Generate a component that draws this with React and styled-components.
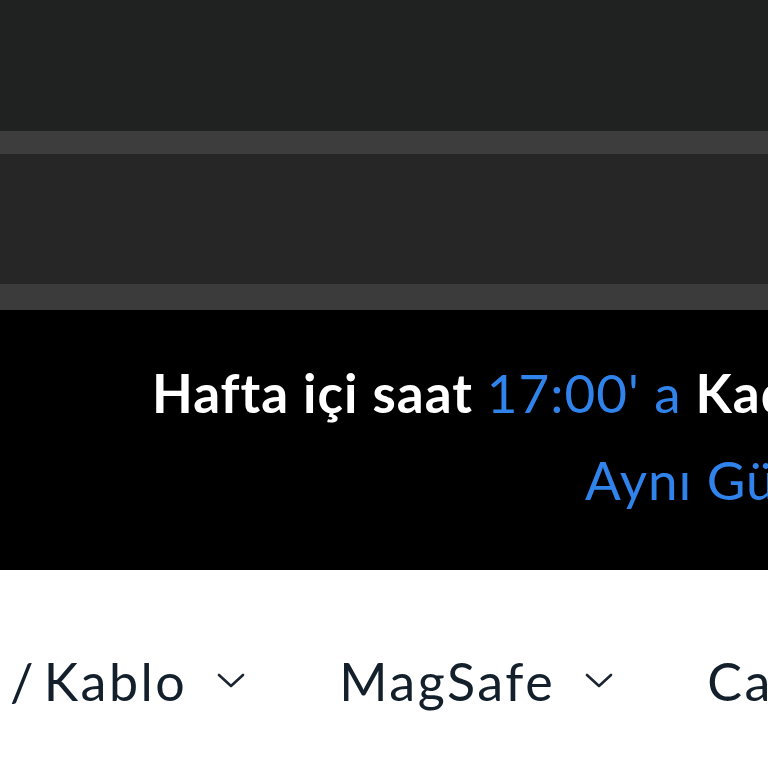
import React from "react";
import styled, { createGlobalStyle } from "styled-components";

const Global = createGlobalStyle`
  html, body { margin: 0; padding: 0; background: #ffffff; }
  body { font-family: "Lato", "Noto Sans", sans-serif; overflow: hidden; }
  * { box-sizing: border-box; }
`;

const Page = styled.div`
  width: 768px;
  height: 768px;
  overflow: hidden;
  display: flex;
  flex-direction: column;
`;

const Band = styled.div`
  flex: 0 0 ${(p) => p.$h}px;
  background: ${(p) => p.$bg};
`;

const Announcement = styled.section`
  flex: 0 0 260px;
  background: #000000;
  display: flex;
  flex-direction: column;
  overflow: hidden;
  padding-top: 39px;
`;

const Line = styled.p`
  margin: 0;
  white-space: nowrap;
  font-size: 53px;
  line-height: 87px;
  letter-spacing: 1px;
  padding-left: ${(p) => p.$indent}px;
  color: #ffffff;
  font-weight: 700;
`;

const Accent = styled.span`
  color: #2f83ea;
  font-weight: 400;
`;

const Nav = styled.nav`
  flex: 1;
  background: #ffffff;
  display: flex;
  align-items: center;
  gap: 94px;
  padding: 24px 0 0 10px;
  white-space: nowrap;
  overflow: hidden;
`;

const NavItem = styled.div`
  display: flex;
  align-items: center;
  gap: 30px;
  font-size: 52px;
  letter-spacing: 2.5px;
  word-spacing: -8px;
  color: #13202c;
  flex: 0 0 auto;
`;

const Chevron = () => (
  <svg width="28" height="16" viewBox="0 0 28 16" fill="none">
    <path d="M2 2 L14 13 L26 2" stroke="#1c2530" strokeWidth="2.6" strokeLinecap="round" strokeLinejoin="round" />
  </svg>
);

export default function App() {
  return (
    <Page>
      <Global />
      <Band $h={131} $bg="#202221" />
      <Band $h={23} $bg="#3c3d3c" />
      <Band $h={130} $bg="#262626" />
      <Band $h={26} $bg="#3b3b3b" />
      <Announcement>
        <Line $indent={152}>
          Hafta içi saat <Accent>17:00' a</Accent> Kadar Verilen Siparişler
        </Line>
        <Line $indent={585}>
          <Accent>Aynı Gün Kargoda</Accent>
        </Line>
      </Announcement>
      <Nav>
        <NavItem>
          / Kablo <Chevron />
        </NavItem>
        <NavItem>
          MagSafe <Chevron />
        </NavItem>
        <NavItem>Cam</NavItem>
      </Nav>
    </Page>
  );
}
